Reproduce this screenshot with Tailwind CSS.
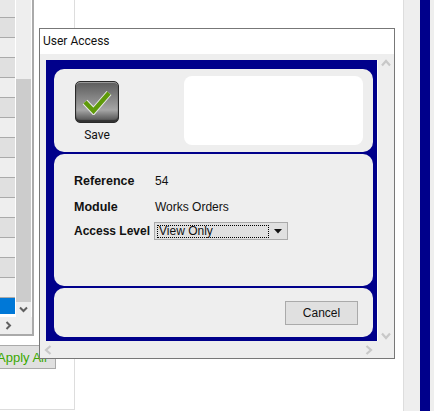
<!DOCTYPE html>
<html>
<head>
<meta charset="utf-8">
<script src="https://cdn.jsdelivr.net/npm/@tailwindcss/browser@4"></script>
</head>
<body class="bg-white overflow-hidden font-['Liberation_Sans',sans-serif] text-[12px] text-[#111]">
<div class="relative w-[434px] h-[411px] overflow-hidden bg-white">

  <!-- background page frame -->
  <div class="absolute left-0 top-0 w-[75px] h-[410px] border-r border-b border-[#ddd]"></div>

  <!-- background grid panel -->
  <div class="absolute left-0 top-0 w-[34px] h-[336px] border-r-2 border-b-2 border-[#aaa] bg-white flex flex-col">
    <div class="flex h-[317px]">
      <div class="w-[15px] flex flex-col">
        <div class="h-[18px] shrink-0 bg-[#e8e8e8] border-b border-[#aaa]"></div>
        <div class="h-[20px] shrink-0 bg-[#e0e0e0] border-b border-[#aaa]"></div>
        <div class="h-[20px] shrink-0 bg-[#eeeeee] border-b border-[#aaa]"></div>
        <div class="h-[20px] shrink-0 bg-[#e0e0e0] border-b border-[#aaa]"></div>
        <div class="h-[20px] shrink-0 bg-[#eeeeee] border-b border-[#aaa]"></div>
        <div class="h-[20px] shrink-0 bg-[#e0e0e0] border-b border-[#aaa]"></div>
        <div class="h-[20px] shrink-0 bg-[#eeeeee] border-b border-[#aaa]"></div>
        <div class="h-[20px] shrink-0 bg-[#e0e0e0] border-b border-[#aaa]"></div>
        <div class="h-[20px] shrink-0 bg-[#eeeeee] border-b border-[#aaa]"></div>
        <div class="h-[20px] shrink-0 bg-[#e0e0e0] border-b border-[#aaa]"></div>
        <div class="h-[20px] shrink-0 bg-[#eeeeee] border-b border-[#aaa]"></div>
        <div class="h-[20px] shrink-0 bg-[#e0e0e0] border-b border-[#aaa]"></div>
        <div class="h-[20px] shrink-0 bg-[#eeeeee] border-b border-[#aaa]"></div>
        <div class="h-[20px] shrink-0 bg-[#e0e0e0] border-b border-[#aaa]"></div>
        <div class="h-[20px] shrink-0 bg-[#eeeeee] border-b border-[#aaa]"></div>
        <div class="h-[16px] shrink-0 bg-[#0078d7]"></div>
      </div>
      <div class="ml-px w-[15px] h-[317px] bg-[#eeeeee] flex flex-col pt-[79px]">
        <div class="h-[223px] bg-[#cccccc]"></div>
        <div class="flex-1 flex items-center justify-center">
          <svg width="9" height="7" viewBox="0 0 9 7"><path d="M1 1.5 L4.5 5 L8 1.5" fill="none" stroke="#606060" stroke-width="2"/></svg>
        </div>
      </div>
    </div>
    <div class="flex-1 bg-[#eeeeee] flex items-center pl-[5px]">
      <svg width="7" height="9" viewBox="0 0 7 9"><path d="M1.5 1 L5 4.5 L1.5 8" fill="none" stroke="#606060" stroke-width="2"/></svg>
    </div>
  </div>

  <!-- Apply All button behind dialog -->
  <div class="absolute left-0 top-[345px] w-[56px] h-[24px] bg-[#e0e0e0] border-r border-b border-t border-[#aaa] overflow-hidden">
    <span class="absolute left-[-3px] top-[2px] text-[13px] text-[#3aa800] whitespace-nowrap">Apply All</span>
  </div>

  <!-- right background strip -->
  <div class="absolute left-[403px] top-0 h-[411px] w-[31px] flex bg-[#eeeeee] border-l border-[#dddddd]">
    <div class="w-[16px]"></div>
    <div class="w-[10px] bg-[#00008b]"></div>
  </div>

  <!-- dialog window -->
  <div class="absolute left-[39px] top-[28px] w-[356px] h-[331px] border border-[#777777] bg-white flex flex-col">
    <div class="h-[25px] shrink-0 pl-[3px] pt-[4px] leading-[16px] text-[#111] font-['Roboto',sans-serif]">User Access</div>
    <div class="flex-1 bg-[#eeeeee] flex flex-col">
      <div class="h-[288px] flex shrink-0">
        <div class="w-[6px] shrink-0"></div>
        <div class="mt-[6px] w-[331px] h-[281px] bg-[#00008b] pl-[8px] pr-[4px] pt-[9px] flex flex-col gap-[2px] shrink-0">
          <!-- panel 1 -->
          <div class="h-[83px] shrink-0 bg-[#eeeeee] rounded-[10px] flex items-start">
            <div class="ml-[15px] mt-[12px] w-[56px] flex flex-col items-center">
              <div class="w-[44px] h-[42px] rounded-[5px] border border-[#2a2a2a] bg-linear-to-b from-[#5c5c5c] via-[#a6a6a6] via-70% to-[#4a4a4a] flex items-center justify-center shadow-[inset_0_1px_0_#9a9a9a,inset_0_-2px_1px_#333333]">
                <svg width="30" height="26" viewBox="0 0 30 26">
                  <path d="M3 13 L11.5 22 L27 4" fill="none" stroke="#e8e8e8" stroke-width="6.5" stroke-linejoin="miter"/>
                  <path d="M3 13 L11.5 22 L27 4" fill="none" stroke="#5f9a0a" stroke-width="4.5" stroke-linejoin="miter"/>
                </svg>
              </div>
              <div class="mt-[5px] leading-[14px] font-['Roboto',sans-serif]">Save</div>
            </div>
            <div class="ml-[59px] mt-[7px] w-[179px] h-[69px] bg-white rounded-[8px]"></div>
          </div>
          <!-- panel 2 -->
          <div class="h-[132px] shrink-0 bg-[#eeeeee] rounded-[10px] pt-[15px] pl-[20px] flex flex-col">
            <div class="flex h-[24px] items-center"><span class="w-[81px] shrink-0 whitespace-nowrap font-bold text-[12.5px]">Reference</span><span>54</span></div>
            <div class="flex h-[26px] items-center pt-[2px]"><span class="w-[81px] shrink-0 whitespace-nowrap font-bold text-[12.5px]">Module</span><span class="-mt-px">Works Orders</span></div>
            <div class="flex h-[24px] items-center">
              <span class="w-[80px] shrink-0 whitespace-nowrap font-bold text-[12px]">Access Level</span>
              <div class="w-[134px] h-[18px] shrink-0 bg-[#e0e0e0] border border-[#aaaaaa] flex items-center pl-[2px] pr-[5px]">
                <div class="w-[112px] h-[13px] border border-dotted border-black leading-[11px] pl-px">View Only</div>
                <svg class="ml-auto" width="8" height="5" viewBox="0 0 8 5"><path d="M0 0 H8 L4 4.5 Z" fill="#111"/></svg>
              </div>
            </div>
          </div>
          <!-- panel 3 -->
          <div class="h-[49px] shrink-0 bg-[#eeeeee] rounded-[10px] flex items-start justify-end pt-[13px] pr-[15px]">
            <div class="w-[73px] h-[24px] bg-[#e0e0e0] border border-[#aaaaaa] flex items-center justify-center">Cancel</div>
          </div>
        </div>
        <div class="w-px bg-white mt-[6px] h-[281px] shrink-0"></div>
        <div class="flex-1 flex flex-col items-center justify-between pt-[5px] pb-[2px]">
          <svg width="10" height="8" viewBox="0 0 10 8"><path d="M1 6.5 L5 2 L9 6.5" fill="none" stroke="#c8c8c8" stroke-width="2.2"/></svg>
          <svg width="10" height="8" viewBox="0 0 10 8"><path d="M1 1.5 L5 6 L9 1.5" fill="none" stroke="#c8c8c8" stroke-width="2.2"/></svg>
        </div>
      </div>
      <div class="flex-1 flex items-center justify-between pl-[4px] pr-[21px]">
        <svg width="8" height="10" viewBox="0 0 8 10"><path d="M6.5 1 L2 5 L6.5 9" fill="none" stroke="#c8c8c8" stroke-width="2.2"/></svg>
        <svg width="8" height="10" viewBox="0 0 8 10"><path d="M1.5 1 L6 5 L1.5 9" fill="none" stroke="#c8c8c8" stroke-width="2.2"/></svg>
      </div>
    </div>
  </div>
</div>
</body>
</html>
